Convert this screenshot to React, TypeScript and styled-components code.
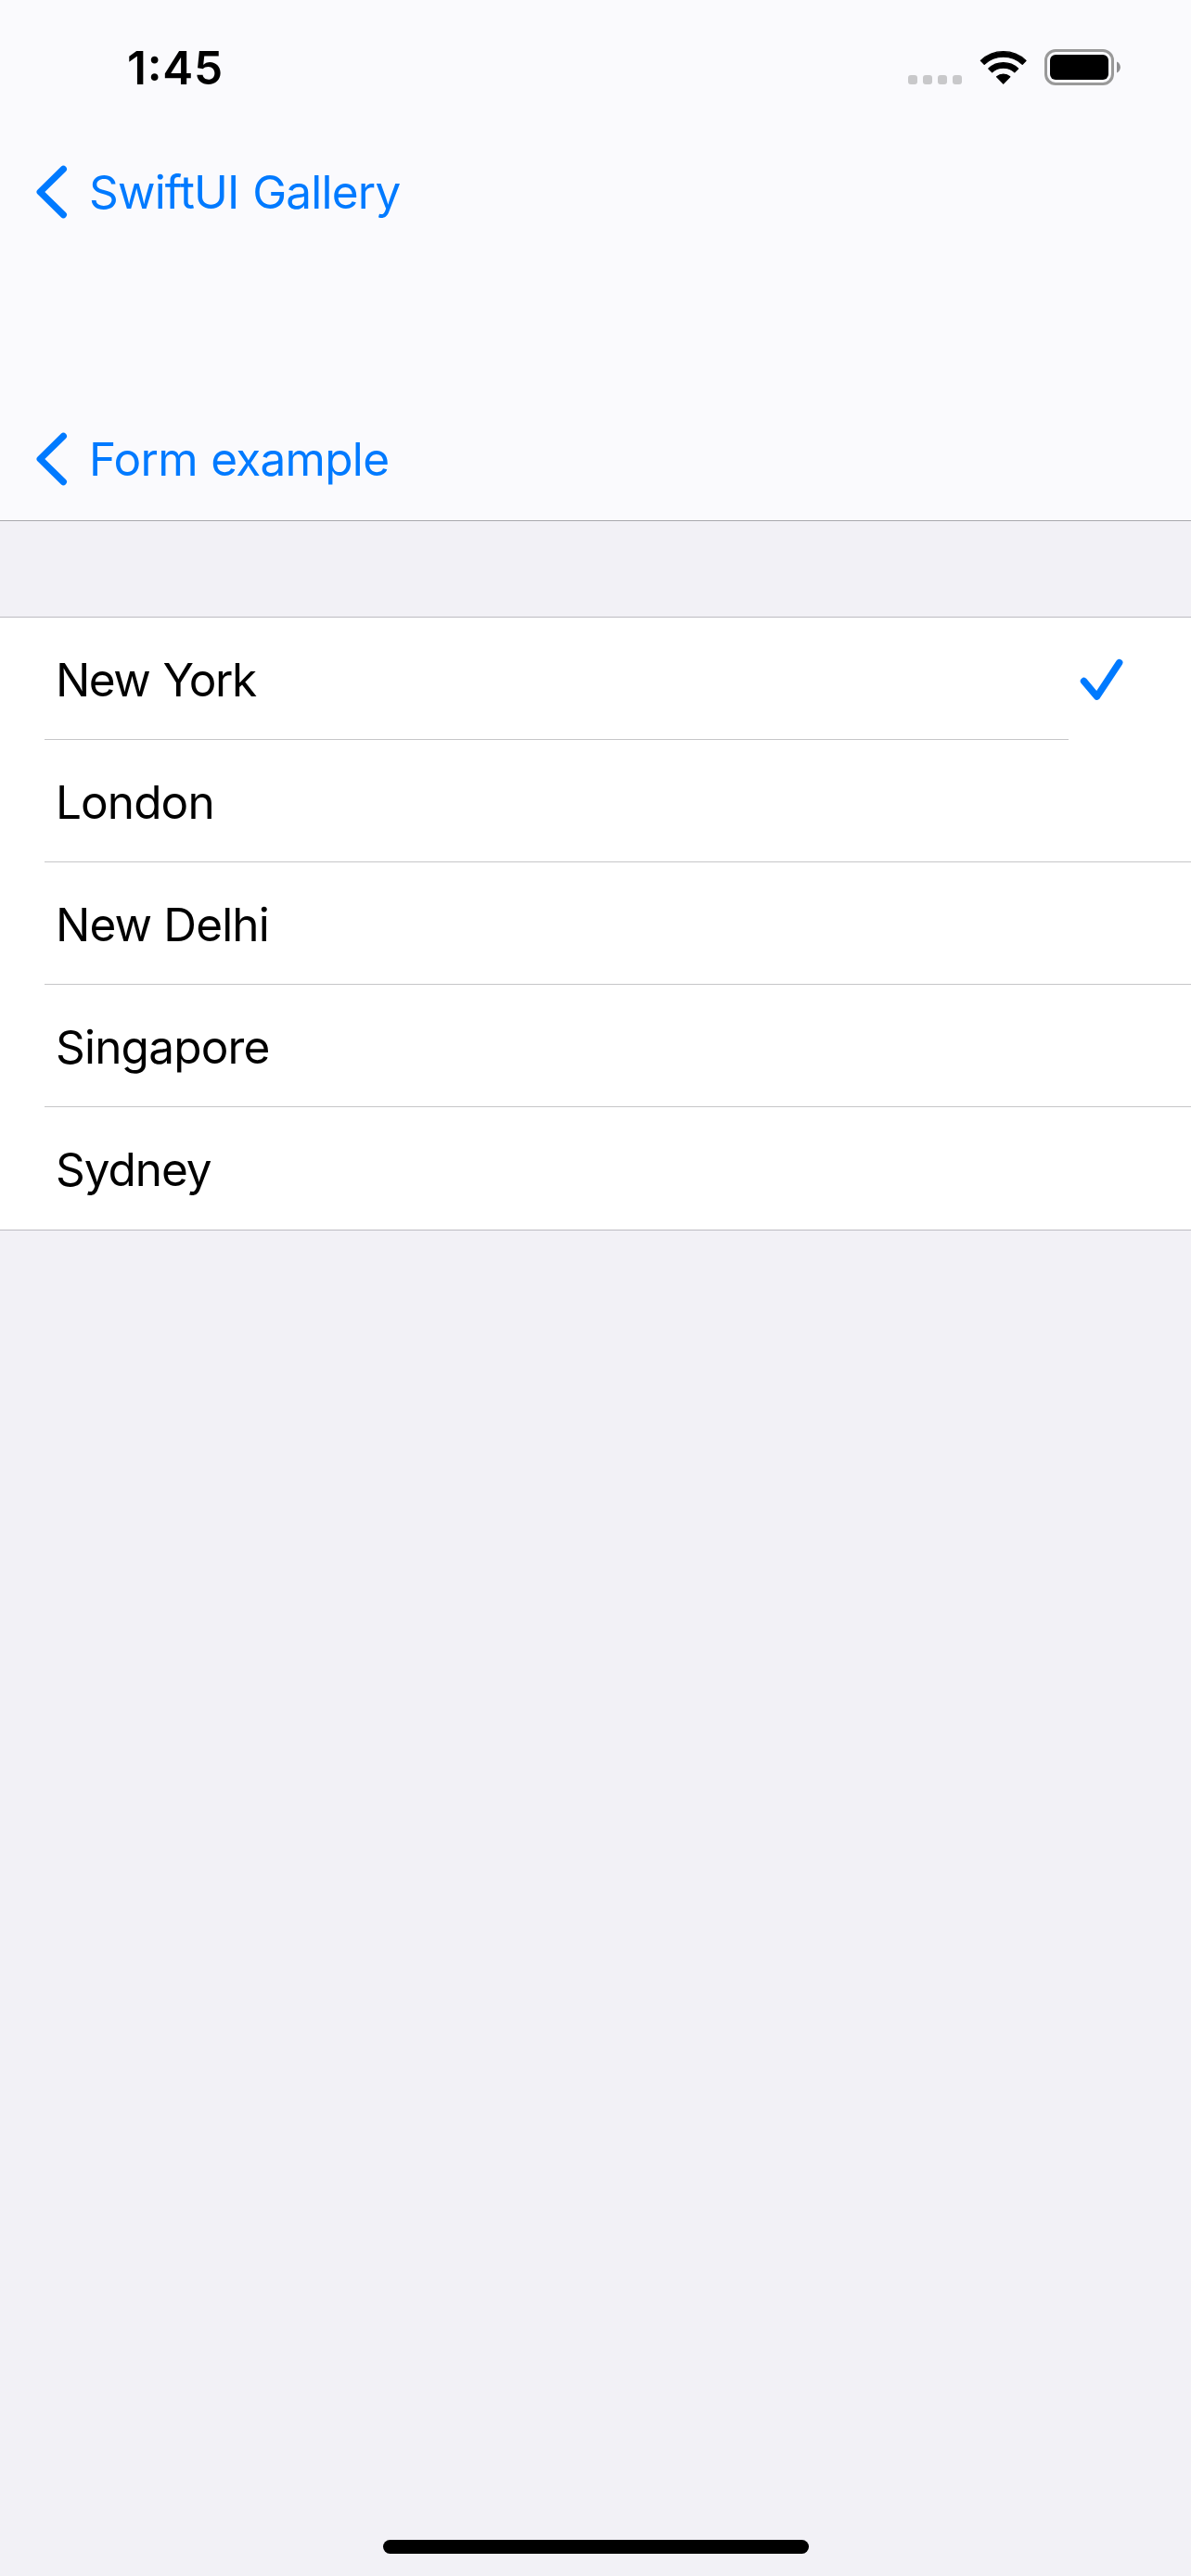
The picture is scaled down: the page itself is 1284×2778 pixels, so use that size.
import React from 'react';
import styled, { createGlobalStyle } from 'styled-components';

const GlobalStyle = createGlobalStyle`
  *, *::before, *::after { box-sizing: border-box; }
  body { margin: 0; background: #f2f1f6; }
`;

const Screen = styled.div`
  display: flex;
  flex-direction: column;
  width: 1284px;
  height: 2778px;
  background: #f2f1f6;
  color: #000;
  font-family: Inter, Roboto, "Liberation Sans", sans-serif;
  font-size: 49.5px;
  line-height: 60px;
  overflow: hidden;
`;

const Header = styled.header`
  display: flex;
  flex-direction: column;
  height: 562px;
  background: #fafafd;
  border-bottom: 1px solid #a9a9ad;
`;

const StatusBar = styled.div`
  display: flex;
  justify-content: space-between;
  height: 141px;
  padding: 43px 76px 0 137px;
`;

const Time = styled.span`
  font-weight: 600;
  letter-spacing: 0.8px;
`;

const Colon = styled.span`
  line-height: 0;
  vertical-align: 4.5px;
`;

const StatusIcons = styled.div`
  display: flex;
  align-items: flex-end;
  height: 49px;
`;

const SignalDots = styled.div`
  display: flex;
  gap: 6px;
  margin-right: 19px;
  padding-bottom: 1px;
`;

const Dot = styled.i`
  width: 10px;
  height: 10px;
  border-radius: 3px;
  background: #c8c8ca;
`;

const WifiGlyph = styled.svg`
  margin-right: 18px;
`;

const NavRow = styled.nav`
  display: flex;
  height: 132px;
`;

const NavSpacer = styled.div`
  flex: 1;
`;

const BackButton = styled.button`
  display: flex;
  align-items: center;
  gap: 23px;
  padding: 0 0 0 39px;
  border: 0;
  background: none;
  color: #007aff;
  font: inherit;
`;

const Label = styled.span<{ $tracking: number; $wordGap?: number }>`
  letter-spacing: ${(p) => p.$tracking}px;
  word-spacing: ${(p) => p.$wordGap ?? 0}px;
  white-space: nowrap;
`;

const List = styled.ul`
  margin: 103px 0 0;
  padding: 0;
  list-style: none;
  background: #fff;
  border-top: 1px solid #bcbbc1;
  border-bottom: 1px solid #bcbbc1;
`;

const Row = styled.li`
  display: flex;
  height: 132px;
  padding-left: 48px;
`;

const RowBody = styled.div<{ $divided: boolean }>`
  display: flex;
  flex: 1;
  align-items: center;
  padding: 2px 0 0 12px;
  border-bottom: ${(p) => (p.$divided ? '1px solid #c6c6c8' : '0')};
`;

const Accessory = styled.div`
  display: flex;
  width: 132px;
  padding: 44px 0 0 12px;
`;

const HomeArea = styled.footer`
  display: flex;
  justify-content: center;
  margin-top: auto;
  padding: 0 0 24px 1px;
`;

const HomeIndicator = styled.div`
  width: 459px;
  height: 15px;
  border-radius: 8px;
  background: #000;
`;

const WifiIcon = () => (
  <WifiGlyph width="52" height="38" viewBox="0 0 52 38">
    <g fill="#000" stroke="#000" strokeWidth="1.2" strokeLinejoin="round">
      <path d="M1.3 11.4A35.4 35.4 0 0 1 50.1 11.4L46.2 15.4A29.9 29.9 0 0 0 5.2 15.4Z" />
      <path d="M9.8 20A23.2 23.2 0 0 1 41.6 20L37.8 23.8A18.2 18.2 0 0 0 13.6 23.8Z" />
      <path d="M18.6 28.8A10.6 10.6 0 0 1 32.8 28.8L25.7 36.2Z" />
    </g>
  </WifiGlyph>
);

const BatteryIcon = () => (
  <svg width="82" height="39" viewBox="0 0 82 39">
    <rect x="1.5" y="1.5" width="72" height="36" rx="10.5" fill="none" stroke="#999" strokeWidth="3" />
    <rect x="6" y="6" width="63" height="27" rx="6" fill="#000" />
    <path d="M78 13.5C83.2 15.6 83.2 23.4 78 25.5Z" fill="#8e8e90" />
  </svg>
);

const BackChevron = () => (
  <svg width="34" height="58" viewBox="0 0 34 58">
    <path
      d="M29.3 4.4L4.2 29L29.3 53.6"
      fill="none"
      stroke="#007aff"
      strokeWidth="7.3"
      strokeLinecap="round"
      strokeLinejoin="round"
    />
  </svg>
);

const Checkmark = () => (
  <svg width="48" height="48" viewBox="0 0 48 48">
    <path
      d="M4.5 24.5L18.5 41.2L42.7 4.6"
      fill="none"
      stroke="#007aff"
      strokeWidth="7.4"
      strokeLinecap="round"
      strokeLinejoin="round"
    />
  </svg>
);

const cities = [
  { name: 'New York', tracking: -1.45, wordGap: 1.6, selected: true },
  { name: 'London', tracking: -0.9 },
  { name: 'New Delhi', tracking: -0.85 },
  { name: 'Singapore', tracking: -0.8 },
  { name: 'Sydney', tracking: -1.05 },
];

export default function App() {
  return (
    <>
      <GlobalStyle />
      <Screen>
        <Header>
          <StatusBar>
            <Time>
              1<Colon>:</Colon>45
            </Time>
            <StatusIcons>
              <SignalDots>
                <Dot />
                <Dot />
                <Dot />
                <Dot />
              </SignalDots>
              <WifiIcon />
              <BatteryIcon />
            </StatusIcons>
          </StatusBar>
          <NavRow>
            <BackButton>
              <BackChevron />
              <Label $tracking={-0.8} $wordGap={1.5}>SwiftUI Gallery</Label>
            </BackButton>
          </NavRow>
          <NavSpacer />
          <NavRow>
            <BackButton>
              <BackChevron />
              <Label $tracking={-0.7} $wordGap={1}>Form example</Label>
            </BackButton>
          </NavRow>
        </Header>
        <List>
          {cities.map((city, i) => (
            <Row key={city.name}>
              <RowBody $divided={i < cities.length - 1}>
                <Label $tracking={city.tracking} $wordGap={city.wordGap}>
                  {city.name}
                </Label>
              </RowBody>
              {city.selected && (
                <Accessory>
                  <Checkmark />
                </Accessory>
              )}
            </Row>
          ))}
        </List>
        <HomeArea>
          <HomeIndicator />
        </HomeArea>
      </Screen>
    </>
  );
}
